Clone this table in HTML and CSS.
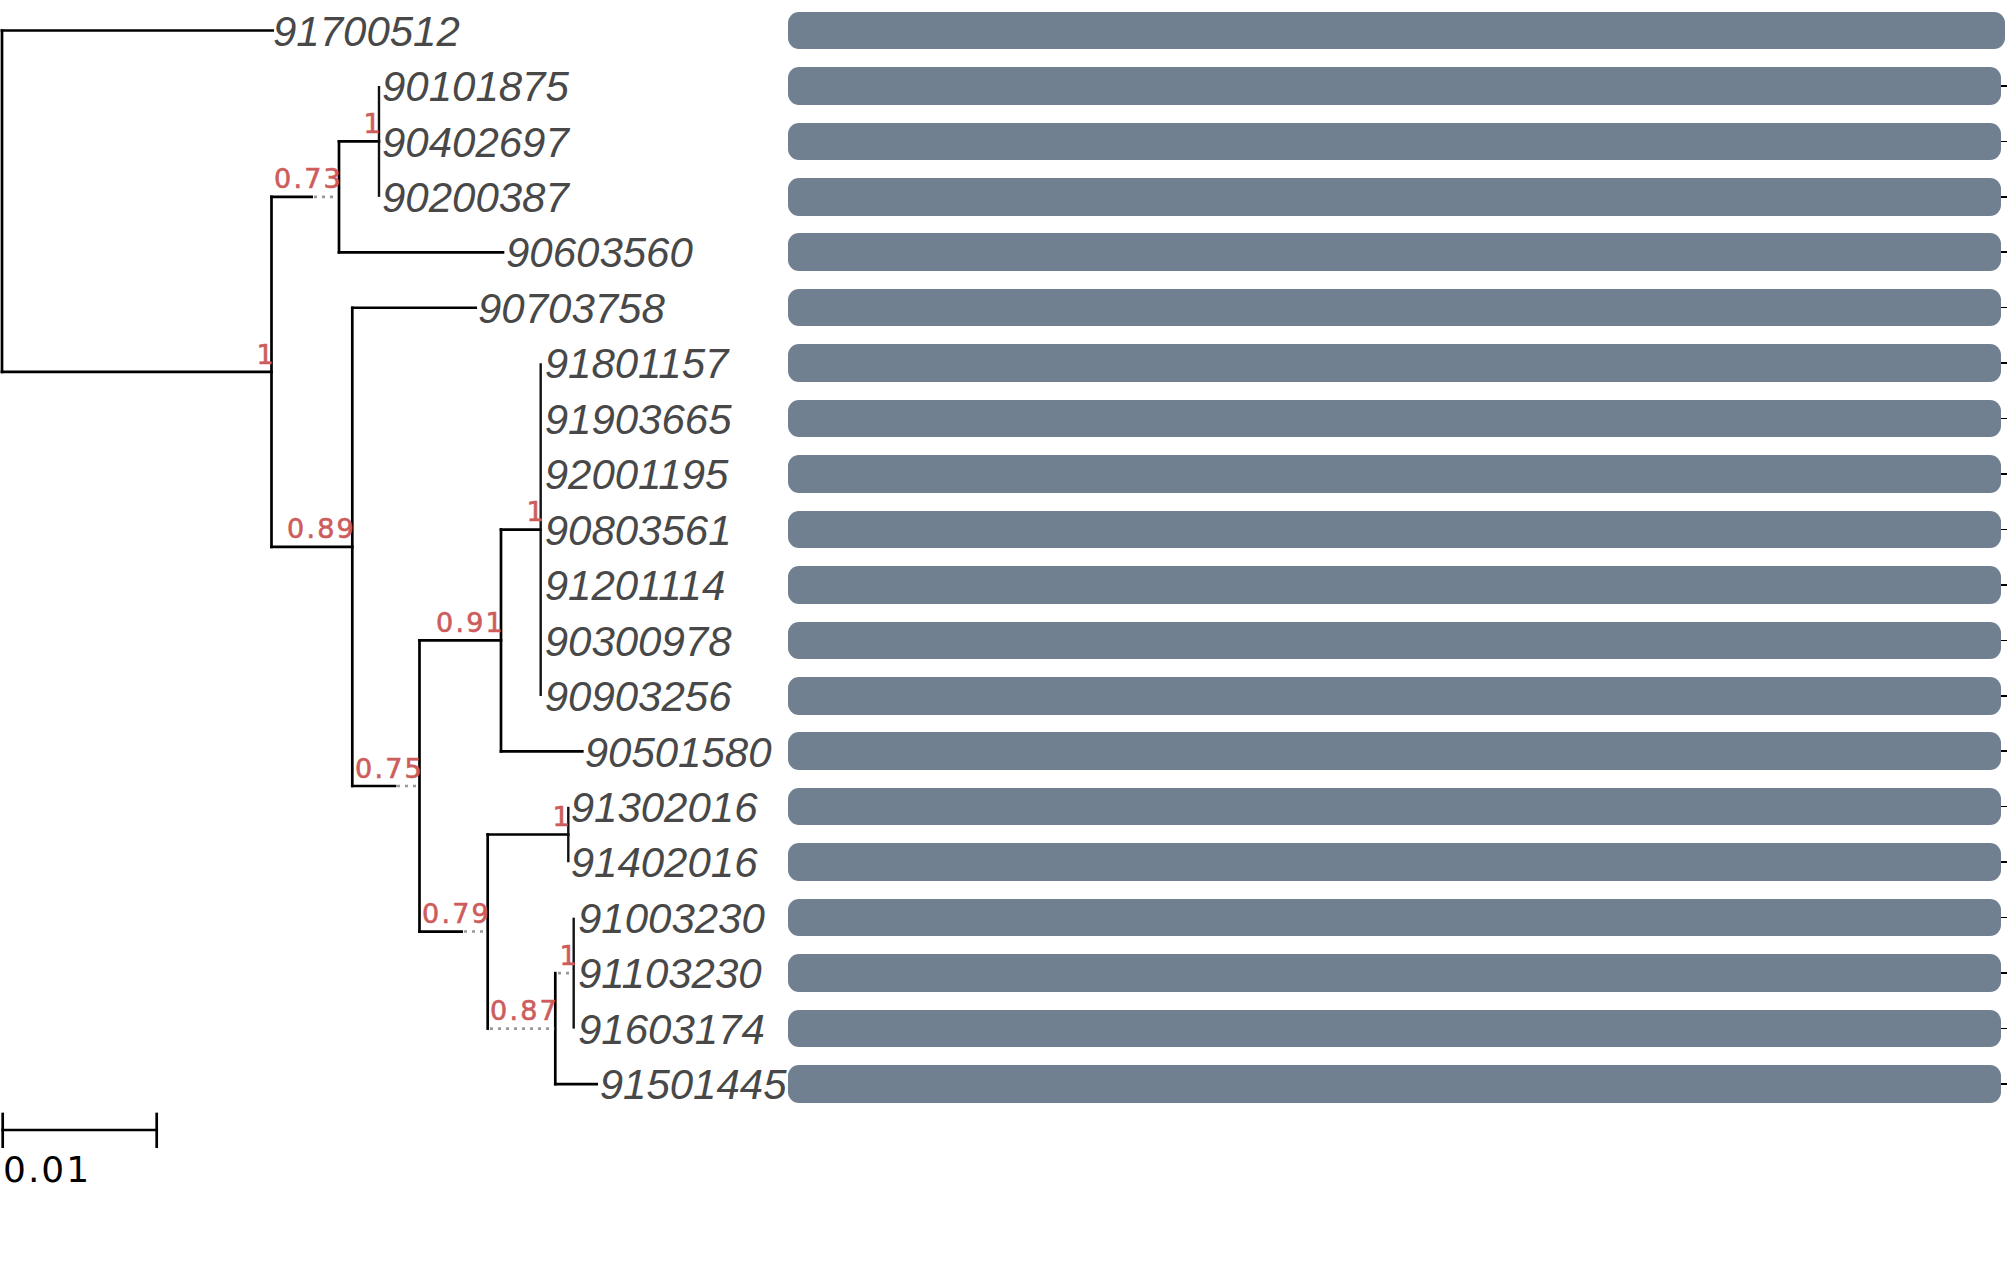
FILE: index.html
```html
<!DOCTYPE html>
<html lang="en">
<head>
<meta charset="utf-8">
<title>Phylogenetic tree</title>
<link rel="stylesheet" href="styles.css">
</head>
<body>
<main class="page">
  <svg class="tree" width="787.7" height="1268" viewBox="0 0 787.7 1268" xmlns="http://www.w3.org/2000/svg">
    <g class="br">
      <path d="M2 30.5 H272.7"/>
      <path d="M2 30.5 V371.9"/>
      <path d="M2 371.9 H271.5"/>
      <path d="M271.5 196.85 V546.9"/>
      <path d="M271.5 196.85 H311.7"/>
      <path d="M339 141.4 V252.3"/>
      <path d="M339 141.4 H379"/>
      <path class="zero" d="M379 85.95 V196.85"/>
      <path d="M339 252.3 H503"/>
      <path d="M271.5 546.9 H352.3"/>
      <path d="M352.3 307.75 V786"/>
      <path d="M352.3 307.75 H475.7"/>
      <path d="M352.3 786 H395"/>
      <path d="M419.5 640.45 V931.55"/>
      <path d="M419.5 640.45 H501"/>
      <path d="M501 529.55 V751.35"/>
      <path d="M501 529.55 H540.7"/>
      <path class="zero" d="M540.7 363.2 V695.9"/>
      <path d="M501 751.35 H582.3"/>
      <path d="M419.5 931.55 H461.7"/>
      <path d="M487.7 834.5 V1028.6"/>
      <path d="M487.7 834.5 H568.3"/>
      <path class="zero" d="M568.3 806.8 V862.25"/>
      <path d="M555.3 973.15 V1084.05"/>
      <path class="zero" d="M573.7 917.7 V1028.6"/>
      <path d="M555.3 1084.05 H596.7"/>
    </g>
    <g class="dot">
      <path d="M314 196.85 H338"/>
      <path d="M397 786 H418.5"/>
      <path d="M464 931.55 H486.7"/>
      <path d="M490 1028.6 H554.3"/>
      <path d="M558 973.15 H572.7"/>
    </g>
    <g class="leaf">
      <text x="273" y="45.7">91700512</text>
      <text x="382" y="101.15">90101875</text>
      <text x="382" y="156.6">90402697</text>
      <text x="382" y="212.05">90200387</text>
      <text x="506" y="267.5">90603560</text>
      <text x="478" y="322.95">90703758</text>
      <text x="544.7" y="378.4">91801157</text>
      <text x="544.7" y="433.85">91903665</text>
      <text x="544.7" y="489.3">92001195</text>
      <text x="544.7" y="544.75">90803561</text>
      <text x="544.7" y="600.2">91201114</text>
      <text x="544.7" y="655.65">90300978</text>
      <text x="544.7" y="711.1">90903256</text>
      <text x="584.7" y="766.55">90501580</text>
      <text x="570.7" y="822">91302016</text>
      <text x="570.7" y="877.45">91402016</text>
      <text x="578" y="932.9">91003230</text>
      <text x="578" y="988.35">91103230</text>
      <text x="578" y="1043.8">91603174</text>
      <text x="599.7" y="1099.25">91501445</text>
    </g>
    <g class="sup">
      <text x="276" y="364">1</text>
      <text x="343" y="188">0.73</text>
      <text x="383" y="133">1</text>
      <text x="356" y="538.5">0.89</text>
      <text x="424" y="778">0.75</text>
      <text x="505" y="632">0.91</text>
      <text x="546" y="521">1</text>
      <text x="491" y="923.5">0.79</text>
      <text x="572" y="826.5">1</text>
      <text x="559" y="1020.5">0.87</text>
      <text x="579" y="965">1</text>
    </g>
    <g class="br">
      <path d="M2.7 1130 H156.7"/>
      <path d="M2.7 1114 V1146.7"/>
      <path d="M156.7 1114 V1146.7"/>
    </g>
    <text class="scale" x="3" y="1182">0.01</text>
  </svg>
  <section class="bars">
    <div class="row first"><div class="bar"></div></div>
    <div class="row"><div class="bar"></div></div>
    <div class="row"><div class="bar"></div></div>
    <div class="row"><div class="bar"></div></div>
    <div class="row"><div class="bar"></div></div>
    <div class="row"><div class="bar"></div></div>
    <div class="row"><div class="bar"></div></div>
    <div class="row"><div class="bar"></div></div>
    <div class="row"><div class="bar"></div></div>
    <div class="row"><div class="bar"></div></div>
    <div class="row"><div class="bar"></div></div>
    <div class="row"><div class="bar"></div></div>
    <div class="row"><div class="bar"></div></div>
    <div class="row"><div class="bar"></div></div>
    <div class="row"><div class="bar"></div></div>
    <div class="row"><div class="bar"></div></div>
    <div class="row"><div class="bar"></div></div>
    <div class="row"><div class="bar"></div></div>
    <div class="row"><div class="bar"></div></div>
    <div class="row"><div class="bar"></div></div>
  </section>
</main>
</body>
</html>
```
FILE: styles.css
```css
html, body {
  margin: 0;
  padding: 0;
  background: #ffffff;
}
body {
  width: 2007px;
  height: 1268px;
  overflow: hidden;
  font-family: "Liberation Sans", Arial, sans-serif;
}
.page {
  display: flex;
  flex-direction: row;
  align-items: flex-start;
  width: 2007px;
  height: 1268px;
}
.tree {
  flex: 0 0 auto;
  display: block;
  overflow: visible;
}
.br path {
  fill: none;
  stroke: #000000;
  stroke-width: 2.7;
  stroke-linecap: square;
}
.br path.zero {
  stroke: #111111;
  stroke-width: 2.4;
  stroke-linecap: butt;
}
.dot path {
  fill: none;
  stroke: #999999;
  stroke-width: 2.6;
  stroke-dasharray: 3 5;
}
.leaf text {
  font-family: "Liberation Sans", Arial, sans-serif;
  font-style: italic;
  font-size: 42px;
  fill: #484848;
}
.sup text {
  font-family: "DejaVu Sans", sans-serif;
  font-size: 27px;
  letter-spacing: 2.2px;
  fill: #cd5c5c;
  stroke: #cd5c5c;
  stroke-width: 0.6;
  text-anchor: end;
}
.scale {
  font-family: "DejaVu Sans", sans-serif;
  font-size: 36px;
  letter-spacing: 2px;
  fill: #000000;
}
.bars {
  flex: 0 0 auto;
  display: flex;
  flex-direction: column;
  padding-top: 2.775px;
}
.row {
  display: flex;
  align-items: center;
  height: 55.45px;
}
.bar {
  width: 1213.6px;
  height: 37.6px;
  border-radius: 11px;
  background: #708090;
}
.row::after {
  content: "";
  display: block;
  width: 6px;
  height: 1.6px;
  background: #000000;
}
.row.first .bar {
  width: 1217.6px;
}
.row.first::after {
  display: none;
}
```
